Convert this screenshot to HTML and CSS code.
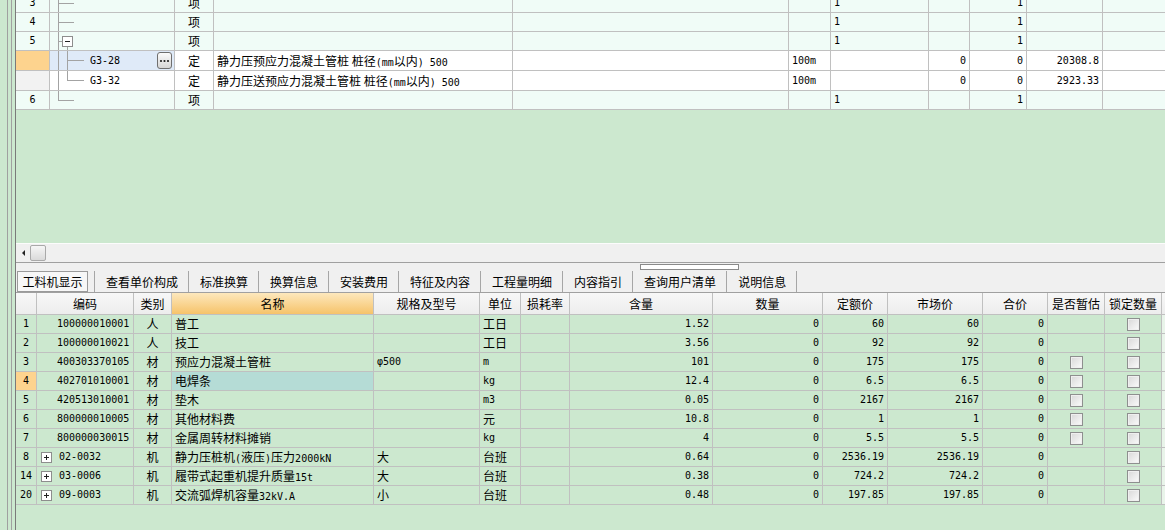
FILE: index.html
```html
<!DOCTYPE html>
<html lang="zh-CN">
<head>
  <meta charset="UTF-8" />
  <title>定额组价</title>
  <link rel="stylesheet" href="styles.css">
</head>
<body>
  <div class="app">
    <div class="gutter"></div>
    <div class="main">

      <!-- upper: item tree grid -->
      <section class="upper">
        <div class="tgrid">
          <div class="tr">
            <div class="num">3</div>
            <div class="tree"><svg width="40" height="19"><path d="M8.5 0V19M8 9.5H24"/></svg></div>
            <div class="c">项</div><div></div><div></div><div></div>
            <div class="n">1</div><div></div><div class="n r">1</div><div></div><div></div>
          </div>
          <div class="tr">
            <div class="num">4</div>
            <div class="tree"><svg width="40" height="19"><path d="M8.5 0V19M8 9.5H24"/></svg></div>
            <div class="c">项</div><div></div><div></div><div></div>
            <div class="n">1</div><div></div><div class="n r">1</div><div></div><div></div>
          </div>
          <div class="tr">
            <div class="num">5</div>
            <div class="tree"><svg width="40" height="19"><path d="M8.5 0V19M8 9.5H12M17.5 15V19"/><rect class="box" x="12.5" y="4.5" width="10" height="10"/><path class="sign" d="M15 9.5H20"/></svg></div>
            <div class="c">项</div><div></div><div></div><div></div>
            <div class="n">1</div><div></div><div class="n r">1</div><div></div><div></div>
          </div>
          <div class="tr w">
            <div class="num cur"></div>
            <div class="tree sel"><svg width="40" height="20"><path d="M8.5 0V20M17.5 0V20M17 9.5H34"/></svg><span class="n">G3-28</span>
              <span class="more"><svg width="13" height="15"><circle cx="3" cy="8" r="1.1"/><circle cx="6.5" cy="8" r="1.1"/><circle cx="10" cy="8" r="1.1"/></svg></span></div>
            <div class="c">定</div>
            <div>静力压预应力混凝土管桩 桩径<span class="n">(mm</span>以内<span class="n">) 500</span></div>
            <div></div><div class="n">100m</div><div></div>
            <div class="n r">0</div><div class="n r">0</div><div class="n r">20308.8</div><div></div>
          </div>
          <div class="tr w">
            <div class="num gray"></div>
            <div class="tree"><svg width="40" height="20"><path d="M8.5 0V20M17.5 0V10M17 9.5H34"/></svg><span class="n">G3-32</span></div>
            <div class="c">定</div>
            <div>静力压送预应力混凝土管桩 桩径<span class="n">(mm</span>以内<span class="n">) 500</span></div>
            <div></div><div class="n">100m</div><div></div>
            <div class="n r">0</div><div class="n r">0</div><div class="n r">2923.33</div><div></div>
          </div>
          <div class="tr">
            <div class="num">6</div>
            <div class="tree"><svg width="40" height="19"><path d="M8.5 0V10M8 9.5H24"/></svg></div>
            <div class="c">项</div><div></div><div></div><div></div>
            <div class="n">1</div><div></div><div class="n r">1</div><div></div><div></div>
          </div>
        </div>
      </section>

      <div class="hscroll">
        <span class="arrow"></span>
        <span class="thumb"></span>
      </div>

      <nav class="tabs">
        <span class="grip"></span>
        <span class="tab on">工料机显示</span>
        <span class="tab">查看单价构成</span>
        <span class="tab">标准换算</span>
        <span class="tab">换算信息</span>
        <span class="tab">安装费用</span>
        <span class="tab">特征及内容</span>
        <span class="tab">工程量明细</span>
        <span class="tab">内容指引</span>
        <span class="tab">查询用户清单</span>
        <span class="tab">说明信息</span>
        <span class="tab end"></span>
      </nav>

      <!-- lower: resources grid -->
      <section class="lower">
        <div class="bh">
          <div></div><div>编码</div><div>类别</div><div class="hot">名称</div><div>规格及型号</div>
          <div>单位</div><div>损耗率</div><div>含量</div><div>数量</div><div>定额价</div>
          <div>市场价</div><div>合价</div><div>是否暂估</div><div>锁定数量</div><div class="fill"></div>
        </div>

        <div class="br">
          <div class="num">1</div><div class="code">100000010001</div><div class="c">人</div><div>普工</div><div></div>
          <div>工日</div><div></div><div class="n r">1.52</div><div class="n r">0</div><div class="n r">60</div>
          <div class="n r">60</div><div class="n r">0</div><div></div><div class="c"><i class="cb"></i></div><div class="fill"></div>
        </div>
        <div class="br">
          <div class="num">2</div><div class="code">100000010021</div><div class="c">人</div><div>技工</div><div></div>
          <div>工日</div><div></div><div class="n r">3.56</div><div class="n r">0</div><div class="n r">92</div>
          <div class="n r">92</div><div class="n r">0</div><div></div><div class="c"><i class="cb"></i></div><div class="fill"></div>
        </div>
        <div class="br">
          <div class="num">3</div><div class="code">400303370105</div><div class="c">材</div><div>预应力混凝土管桩</div><div class="n">φ500</div>
          <div class="n">m</div><div></div><div class="n r">101</div><div class="n r">0</div><div class="n r">175</div>
          <div class="n r">175</div><div class="n r">0</div><div class="c"><i class="cb"></i></div><div class="c"><i class="cb"></i></div><div class="fill"></div>
        </div>
        <div class="br">
          <div class="num cur">4</div><div class="code">402701010001</div><div class="c">材</div><div class="pick">电焊条</div><div></div>
          <div class="n">kg</div><div></div><div class="n r">12.4</div><div class="n r">0</div><div class="n r">6.5</div>
          <div class="n r">6.5</div><div class="n r">0</div><div class="c"><i class="cb"></i></div><div class="c"><i class="cb"></i></div><div class="fill"></div>
        </div>
        <div class="br">
          <div class="num">5</div><div class="code">420513010001</div><div class="c">材</div><div>垫木</div><div></div>
          <div class="n">m3</div><div></div><div class="n r">0.05</div><div class="n r">0</div><div class="n r">2167</div>
          <div class="n r">2167</div><div class="n r">0</div><div class="c"><i class="cb"></i></div><div class="c"><i class="cb"></i></div><div class="fill"></div>
        </div>
        <div class="br">
          <div class="num">6</div><div class="code">800000010005</div><div class="c">材</div><div>其他材料费</div><div></div>
          <div>元</div><div></div><div class="n r">10.8</div><div class="n r">0</div><div class="n r">1</div>
          <div class="n r">1</div><div class="n r">0</div><div class="c"><i class="cb"></i></div><div class="c"><i class="cb"></i></div><div class="fill"></div>
        </div>
        <div class="br">
          <div class="num">7</div><div class="code">800000030015</div><div class="c">材</div><div>金属周转材料摊销</div><div></div>
          <div class="n">kg</div><div></div><div class="n r">4</div><div class="n r">0</div><div class="n r">5.5</div>
          <div class="n r">5.5</div><div class="n r">0</div><div class="c"><i class="cb"></i></div><div class="c"><i class="cb"></i></div><div class="fill"></div>
        </div>
        <div class="br">
          <div class="num">8</div><div class="code sub"><i class="plus"></i>02-0032</div><div class="c">机</div><div>静力压桩机<span class="n">(</span>液压<span class="n">)</span>压力<span class="n">2000kN</span></div><div>大</div>
          <div>台班</div><div></div><div class="n r">0.64</div><div class="n r">0</div><div class="n r">2536.19</div>
          <div class="n r">2536.19</div><div class="n r">0</div><div></div><div class="c"><i class="cb"></i></div><div class="fill"></div>
        </div>
        <div class="br">
          <div class="num">14</div><div class="code sub"><i class="plus"></i>03-0006</div><div class="c">机</div><div>履带式起重机提升质量<span class="n">15t</span></div><div>大</div>
          <div>台班</div><div></div><div class="n r">0.38</div><div class="n r">0</div><div class="n r">724.2</div>
          <div class="n r">724.2</div><div class="n r">0</div><div></div><div class="c"><i class="cb"></i></div><div class="fill"></div>
        </div>
        <div class="br">
          <div class="num">20</div><div class="code sub"><i class="plus"></i>09-0003</div><div class="c">机</div><div>交流弧焊机容量<span class="n">32kV.A</span></div><div>小</div>
          <div>台班</div><div></div><div class="n r">0.48</div><div class="n r">0</div><div class="n r">197.85</div>
          <div class="n r">197.85</div><div class="n r">0</div><div></div><div class="c"><i class="cb"></i></div><div class="fill"></div>
        </div>
      </section>
    </div>
  </div>
</body>
</html>
```

FILE: styles.css
```css
body {
  margin: 0;
  font-family: "Noto Sans CJK SC", sans-serif;
  font-size: 12px;
  color: #000;
  background: #cce8cf;
  overflow: hidden;
}

.app {
  display: flex;
  height: 530px;
}

/* left splitter strip */
.gutter {
  width: 15px;
  flex: none;
  background:
    linear-gradient(90deg, transparent 7px, #a0a0a0 7px, #a0a0a0 8px, transparent 8px,
                    transparent 11px, #a0a0a0 11px, #a0a0a0 12px, transparent 12px);
}

.main {
  flex: 1;
  display: flex;
  flex-direction: column;
  border-left: 1px solid #7a7a7a;
  min-width: 0;
}

/* ---------- upper grid ---------- */
.upper {
  height: 243px;
  flex: none;
  overflow: hidden;
}

.tgrid {
  margin-top: -6px;
}

.tr {
  display: grid;
  grid-template-columns: 34px 125px 39px 299px 276px 42px 98px 41px 57px 76px 80px;
  height: 19px;
  background: #f0fcf7;
}

.tr.w {
  height: 20px;
  background: #fff;
}

.tr > div,
.br > div {
  box-sizing: border-box;
  border-right: 1px solid #c0c0c0;
  border-bottom: 1px solid #c0c0c0;
  padding: 0 3px;
  line-height: 18px;
  white-space: nowrap;
  overflow: hidden;
}

.tr.w > div {
  line-height: 19px;
}

.num {
  text-align: center;
  font-family: "DejaVu Sans Mono", monospace;
  font-size: 10px;
}

.num.cur {
  background: #fdd38e;
}

.num.gray {
  background: #f2f2f2;
}

.tr > .tree {
  display: flex;
  align-items: center;
  padding: 0;
}

.tree > svg {
  flex: none;
  align-self: flex-start;
}

.tree path {
  stroke: #a3a3a3;
  fill: none;
  shape-rendering: crispEdges;
}

.tree .box {
  stroke: #8d8d8d;
  fill: #fff;
  shape-rendering: crispEdges;
}

.tree path.sign {
  stroke: #222;
}

.tree.sel {
  background: #dfeaf8;
}

.more {
  display: flex;
  margin: 0 2px 0 auto;
  width: 13px;
  height: 15px;
  border: 1px solid #6f6f6f;
  border-radius: 3px;
  background: linear-gradient(#fbfbfb, #d6d6d6);
}

.more circle {
  fill: #1e1e1e;
}

.n {
  font-family: "DejaVu Sans Mono", monospace;
  font-size: 10px;
}

.c {
  text-align: center;
}

.r {
  text-align: right;
}

/* ---------- scroll + tabs ---------- */
.hscroll {
  height: 18px;
  flex: none;
  background: #f0f0f0;
  border-top: 1px solid #fcfcfc;
  display: flex;
  align-items: center;
  padding-left: 6px;
  gap: 5px;
}

.arrow {
  width: 0;
  height: 0;
  border-top: 3px solid transparent;
  border-bottom: 3px solid transparent;
  border-right: 3px solid #222;
}

.thumb {
  width: 14px;
  height: 14px;
  border: 1px solid #a9a9a9;
  border-radius: 2px;
  background: linear-gradient(#f6f6f6, #dadada);
}

.tabs {
  position: relative;
  height: 30px;
  flex: none;
  box-sizing: border-box;
  border-top: 1px solid #a0a0a0;
  background: #f0f0f0;
  display: flex;
  align-items: flex-end;
  padding: 0 0 0 1px;
}

.grip {
  position: absolute;
  left: 624px;
  top: 1px;
  width: 97px;
  height: 4px;
  border: 1px solid #8a8a8a;
  background: #fff;
}

.tab {
  height: 21px;
  line-height: 21px;
  box-sizing: border-box;
  padding: 0 10px 0 11px;
  border-left: 1px solid #a6a6a6;
  white-space: nowrap;
}

.tab.on {
  width: 71px;
  padding: 0;
  margin-right: 6px;
  line-height: 19px;
  text-align: center;
  border: 1px solid #9a9a9a;
  background: #f7f7f7;
}

.tab.end {
  padding: 0;
}

/* ---------- lower grid ---------- */
.lower {
  flex: 1;
  border-top: 1px solid #a0a0a0;
}

.bh,
.br {
  display: grid;
  grid-template-columns: 21px 97px 38px 202px 106px 41px 49px 143px 110px 65px 95px 65px 57px 57px 1fr;
}

.bh {
  height: 22px;
  background: linear-gradient(#f7f7f7, #ececec);
}

.bh > div {
  box-sizing: border-box;
  border-right: 1px solid #c0c0c0;
  border-bottom: 1px solid #c0c0c0;
  line-height: 21px;
  text-align: center;
  white-space: nowrap;
  overflow: hidden;
}

.bh > .hot {
  background: linear-gradient(#fde8bd, #f6c36a);
}

.br {
  height: 19px;
  background: #cce8cf;
}

.br > .pick {
  background: #b5dcd6;
}

.br > .code {
  padding-left: 20px;
  font-family: "DejaVu Sans Mono", monospace;
  font-size: 10px;
}

.br > .code.sub {
  padding-left: 4px;
  display: flex;
  align-items: center;
}

.plus {
  width: 9px;
  height: 9px;
  margin-right: 7px;
  border: 1px solid #8d8d8d;
  background:
    linear-gradient(#222, #222) center / 5px 1px no-repeat,
    linear-gradient(#222, #222) center / 1px 5px no-repeat,
    #fff;
}

.br > div.c {
  display: flex;
  justify-content: center;
  align-items: center;
}

.cb {
  width: 11px;
  height: 11px;
  border: 1px solid #8e8f8f;
  background: linear-gradient(135deg, #d8d8d8, #fbfbfb);
  box-shadow: inset 0 0 0 1px #efefef;
}

.bh > .fill,
.br > .fill {
  border-right: 0;
}

.br > .fill {
  background: #e9f4ea;
}
```
